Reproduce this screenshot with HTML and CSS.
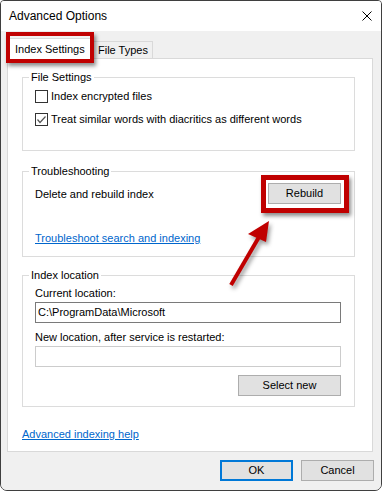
FILE: index.html
```html
<!DOCTYPE html>
<html>
<head>
<meta charset="utf-8">
<title>Advanced Options</title>
<link rel="stylesheet" href="styles.css">
</head>
<body>
<div class="window">
  <div class="titlebar">
    <span class="title">Advanced Options</span>
    <svg class="close" width="10" height="10" viewBox="0 0 10 10"><path d="M0.5 0.5 L9.5 9.5 M9.5 0.5 L0.5 9.5" stroke="#000" stroke-width="1" fill="none"/></svg>
  </div>
  <div class="body">
    <div class="tabs">
      <div class="tab active">Index Settings</div>
      <div class="tab">File Types</div>
    </div>
    <div class="panel">
      <div class="group g1">
        <div class="legend">File Settings</div>
        <label class="check first"><span class="box"></span>Index encrypted files</label>
        <label class="check second"><span class="box"><svg width="11" height="11" viewBox="0 0 11 11"><polyline points="1.5,5.5 4,8.5 9.5,2.5" fill="none" stroke="#555" stroke-width="1.2"/></svg></span>Treat similar words with diacritics as different words</label>
      </div>
      <div class="group g2">
        <div class="legend">Troubleshooting</div>
        <div class="row">
          <span>Delete and rebuild index</span>
          <button class="btn">Rebuild</button>
        </div>
        <a class="link trouble" href="#">Troubleshoot search and indexing</a>
      </div>
      <div class="group g3">
        <div class="legend">Index location</div>
        <div class="label cur">Current location:</div>
        <div class="input">C:\ProgramData\Microsoft</div>
        <div class="label new">New location, after service is restarted:</div>
        <div class="input disabled"></div>
        <div class="actions"><button class="btn wide">Select new</button></div>
      </div>
      <a class="link help" href="#">Advanced indexing help</a>
    </div>
    <div class="footer">
      <button class="btn default">OK</button>
      <button class="btn">Cancel</button>
    </div>
  </div>
  <div class="hl hl-tab"></div>
  <div class="hl hl-rebuild"></div>
  <svg class="arrow" width="382" height="491" viewBox="0 0 382 491">
    <line x1="231" y1="285" x2="259" y2="237" stroke="#c00000" stroke-width="4"/>
    <polygon points="269,221 248,234 266,242" fill="#c00000"/>
  </svg>
</div>
</body>
</html>
```
FILE: styles.css
```css
* { box-sizing: border-box; }
html, body { margin: 0; padding: 0; background: #fff; }
body {
  font-family: "Liberation Sans", Arial, sans-serif;
  font-size: 11px;
  color: #000;
}
.window {
  position: relative;
  width: 382px;
  height: 491px;
  border: 1px solid #3f3f3f;
  border-radius: 4px 4px 7px 7px;
  overflow: hidden;
  display: flex;
  flex-direction: column;
  background: #f0f0f0;
}
.titlebar {
  height: 30px;
  background: #fff;
  display: flex;
  align-items: center;
  justify-content: space-between;
  padding: 0 9px 0 8px;
}
.title { font-size: 12px; line-height: 16px; }
.close { display: block; }
.body {
  flex: 1;
  background: #f0f0f0;
  padding-top: 7px;
  display: flex;
  flex-direction: column;
}
.tabs {
  display: flex;
  align-items: flex-end;
  margin-left: 6px;
}
.tab {
  height: 17px;
  line-height: 16px;
  padding: 0 4px 0 4px;
  border: 1px solid #d9d9d9;
  border-bottom: none;
  background: #f0f0f0;
  white-space: nowrap;
}
.tab.active {
  height: 21px;
  line-height: 20px;
  padding: 0 7px 0 7px;
  width: 86px;
  background: #fff;
  margin-bottom: -1px;
  position: relative;
  z-index: 1;
  border-right: none;
}
.panel {
  margin: 0 8px 0 6px;
  background: #fff;
  border: 1px solid #d9d9d9;
  padding: 18px 0 9px 14px;
}
.group {
  width: 333px;
  border: 1px solid #dcdcdc;
  padding: 0 13px 0 12px;
}
.legend {
  display: table;
  line-height: 16px;
  margin: -9px 0 0 -6px;
  padding: 0 2px;
  background: #fff;
}
.g1 { padding-bottom: 23px; }
.g2 { margin-top: 20px; padding-bottom: 10px; }
.g3 { margin-top: 18px; padding-bottom: 10px; }
.check {
  display: flex;
  align-items: center;
  height: 16px;
  line-height: 16px;
}
.check.first { margin-top: 3px; }
.check.second { margin-top: 7px; }
.box {
  width: 13px;
  height: 13px;
  border: 1px solid #333;
  background: #fff;
  margin-right: 3px;
  display: flex;
  align-items: center;
  justify-content: center;
}
.box svg { display: block; }
.row {
  margin-top: 4px;
  display: flex;
  align-items: center;
  justify-content: space-between;
  height: 21px;
}
.btn {
  font-family: "Liberation Sans", Arial, sans-serif;
  font-size: 11px;
  color: #000;
  width: 73px;
  height: 21px;
  padding: 0;
  background: #e1e1e1;
  border: 1px solid #adadad;
  border-radius: 0;
  line-height: 19px;
}
.btn.wide { width: 103px; }
.btn.default { border: 2px solid #0078d7; line-height: 17px; }
.link {
  display: block;
  width: max-content;
  line-height: 16px;
  color: #0066cc;
  text-decoration: underline;
}
.trouble { margin-top: 26px; }
.help { margin-top: 19px; margin-left: 0; }
.label { line-height: 16px; }
.label.cur { margin-top: 2px; }
.label.new { margin-top: 6px; }
.input {
  margin-top: 1px;
  height: 21px;
  border: 1px solid #7a7a7a;
  background: #fff;
  padding: 0 2px;
  line-height: 19px;
}
.input.disabled { border-color: #cccccc; }
.actions {
  margin-top: 8px;
  display: flex;
  justify-content: flex-end;
}
.footer {
  display: flex;
  justify-content: flex-end;
  gap: 8px;
  margin-top: 8px;
  padding-right: 7px;
}
.hl {
  position: absolute;
  border: 4px solid #c00000;
  box-shadow: 2px 3px 4px rgba(0,0,0,0.45);
  z-index: 3;
}
.hl-tab { left: 5px; top: 31px; width: 88px; height: 31px; }
.hl-rebuild { left: 260px; top: 174px; width: 88px; height: 38px; border-width: 5px; }
.arrow {
  position: absolute;
  left: -1px;
  top: -1px;
  z-index: 3;
  pointer-events: none;
  filter: drop-shadow(2px 3px 2px rgba(0,0,0,0.4));
}
```
